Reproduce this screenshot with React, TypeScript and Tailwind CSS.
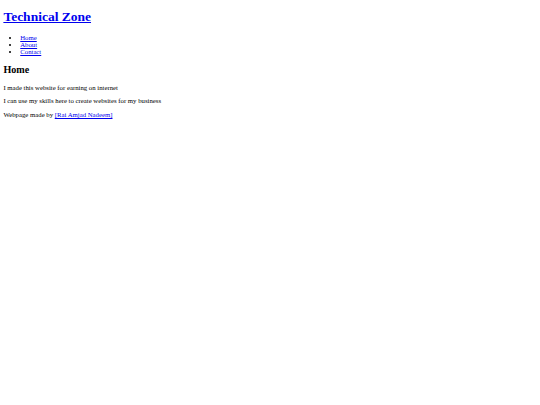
export default function App() {
  // page looks like a default-styled html doc shown at 540/1280 scale
  return (
    <div className="min-h-[405px] bg-white px-[3.375px] py-[9.05px] text-black font-['Liberation_Serif',serif] text-[6.75px] leading-[normal]">
      <h1 className="text-[13.5px] font-bold leading-[normal]">
        <a href="#" className="text-[#0000ee] underline">Technical Zone</a>
      </h1>
      <ul className="my-[9.05px] list-disc pl-[16.875px]">
        <li><a href="#" className="text-[#0000ee] underline">Home</a></li>
        <li><a href="#" className="text-[#0000ee] underline">About</a></li>
        <li><a href="#" className="text-[#0000ee] underline">Contact</a></li>
      </ul>
      <h2 className="my-[8.4px] text-[10.125px] font-bold leading-[normal]">Home</h2>
      <p className="my-[6.75px]">I made this website for earning on internet</p>
      <p className="my-[6.75px]">I can use my skills here to create websites for my business</p>
      <p className="mt-[6.75px]">
        Webpage made by <a href="#" className="text-[#0000ee] underline">[Rai Amjad Nadeem]</a>
      </p>
    </div>
  );
}
